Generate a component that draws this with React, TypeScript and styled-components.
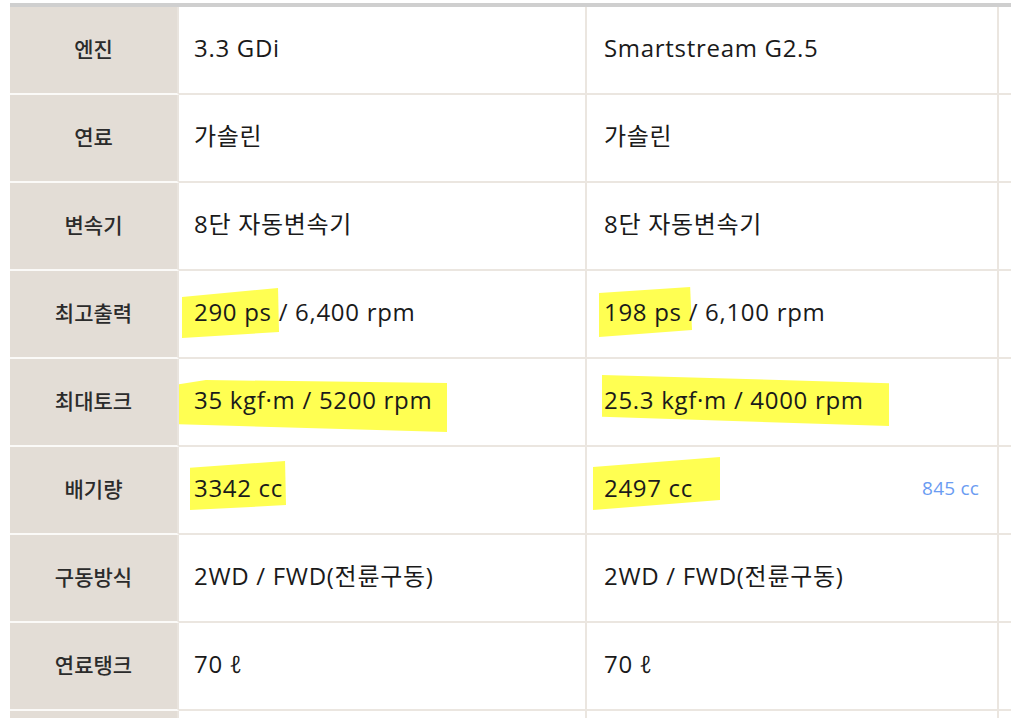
import React from "react";
import styled, { createGlobalStyle } from "styled-components";

const Global = createGlobalStyle`
  html, body { margin: 0; padding: 0; background: #ffffff; overflow: hidden; }
  body { font-family: "Open Sans", "Noto Sans CJK KR", sans-serif; }
`;

const Page = styled.div`
  padding: 3px 0 0 10px;
  width: 1300px;
`;

const Table = styled.table`
  border-collapse: separate;
  border-spacing: 0;
  table-layout: fixed;
  width: 1191px;
  border-top: 4px solid #cfcfcf;
`;

const Label = styled.th`
  width: 167px;
  height: 82px;
  padding: 0 0 4px 0;
  background: #e3ddd6;
  border-right: 2px solid #e9e4de;
  border-bottom: 2px solid #fbfaf8;
  font-family: "Noto Sans CJK KR", sans-serif;
  font-size: 21px;
  font-weight: 500;
  color: #2b2b2b;
  text-align: center;
  vertical-align: middle;
  line-height: 26px;
`;

const Cell = styled.td<{ $w: number }>`
  width: ${(p) => p.$w}px;
  height: 82px;
  padding: 0 0 4px 0;
  background: #ffffff;
  border-right: 2px solid #ebe6e0;
  border-bottom: 2px solid #ebe6e0;
  vertical-align: middle;
`;

const CellInner = styled.div<{ $pl: number }>`
  display: flex;
  align-items: center;
  justify-content: space-between;
  padding: 0 18px 0 ${(p) => p.$pl}px;
  font-family: "Open Sans", "Noto Sans CJK KR", sans-serif;
  font-size: 24px;
  letter-spacing: 0.7px;
  color: #1a1a1a;
  line-height: 26px;
  white-space: nowrap;
`;

const Value = styled.span`
  position: relative;
  z-index: 0;
  display: inline-block;
  line-height: 26px;
`;

const Marker = styled.span<{
  $l: number;
  $t: number;
  $w: number;
  $h: number;
  $clip: string;
}>`
  position: relative;
  display: inline-block;
  line-height: 26px;
  &::before {
    content: "";
    position: absolute;
    z-index: -1;
    left: ${(p) => p.$l}px;
    top: ${(p) => p.$t}px;
    width: ${(p) => p.$w}px;
    height: ${(p) => p.$h}px;
    background: #ffff52;
    clip-path: polygon(${(p) => p.$clip});
  }
`;

const Note = styled.span`
  font-family: "Open Sans", sans-serif;
  font-size: 19px;
  letter-spacing: 0.2px;
  color: #6b9cf2;
  line-height: 26px;
`;

type Hl = { l: number; t: number; w: number; h: number; clip: string };

type CellData = { text: string; hl?: Hl; rest?: string; note?: string };

type Row = { label: string; a: CellData; b: CellData };

const rows: Row[] = [
  { label: "엔진", a: { text: "3.3 GDi" }, b: { text: "Smartstream G2.5" } },
  { label: "연료", a: { text: "가솔린" }, b: { text: "가솔린" } },
  { label: "변속기", a: { text: "8단 자동변속기" }, b: { text: "8단 자동변속기" } },
  {
    label: "최고출력",
    a: {
      text: "290 ps",
      rest: " / 6,400 rpm",
      hl: { l: -12, t: -11, w: 97, h: 50, clip: "0 18%, 99% 0, 100% 88%, 0 100%" },
    },
    b: {
      text: "198 ps",
      rest: " / 6,100 rpm",
      hl: { l: -5, t: -12, w: 93, h: 50, clip: "0 12%, 98% 0, 100% 86%, 0 100%" },
    },
  },
  {
    label: "최대토크",
    a: {
      text: "35 kgf·m / 5200 rpm",
      hl: { l: -15, t: -7, w: 268, h: 52, clip: "0 8%, 10% 0, 100% 6%, 100% 100%, 0 85%" },
    },
    b: {
      text: "25.3 kgf·m / 4000 rpm",
      hl: { l: -2, t: -12, w: 287, h: 51, clip: "0 0, 100% 16%, 100% 100%, 0 82%" },
    },
  },
  {
    label: "배기량",
    a: {
      text: "3342 cc",
      hl: { l: -4, t: -14, w: 96, h: 49, clip: "0 14%, 99% 0, 100% 90%, 0 100%" },
    },
    b: {
      text: "2497 cc",
      note: "845 cc",
      hl: { l: -11, t: -18, w: 127, h: 53, clip: "0 19%, 100% 0, 100% 81%, 0 100%" },
    },
  },
  { label: "구동방식", a: { text: "2WD / FWD(전륜구동)" }, b: { text: "2WD / FWD(전륜구동)" } },
  { label: "연료탱크", a: { text: "70 ℓ" }, b: { text: "70 ℓ" } },
  { label: "", a: { text: "" }, b: { text: "" } },
];

function Content({ d }: { d: CellData }) {
  return (
    <>
      <Value>
        {d.hl ? (
          <Marker $l={d.hl.l} $t={d.hl.t} $w={d.hl.w} $h={d.hl.h} $clip={d.hl.clip}>
            {d.text}
          </Marker>
        ) : (
          d.text
        )}
        {d.rest}
      </Value>
      {d.note ? <Note>{d.note}</Note> : null}
    </>
  );
}

export default function App() {
  return (
    <Page>
      <Global />
      <Table>
        <tbody>
          {rows.map((r, i) => (
            <tr key={i}>
              <Label>{r.label}</Label>
              <Cell $w={406}>
                <CellInner $pl={15}>
                  <Content d={r.a} />
                </CellInner>
              </Cell>
              <Cell $w={410}>
                <CellInner $pl={17}>
                  <Content d={r.b} />
                </CellInner>
              </Cell>
              <Cell $w={200}>
                <CellInner $pl={17} />
              </Cell>
            </tr>
          ))}
        </tbody>
      </Table>
    </Page>
  );
}
